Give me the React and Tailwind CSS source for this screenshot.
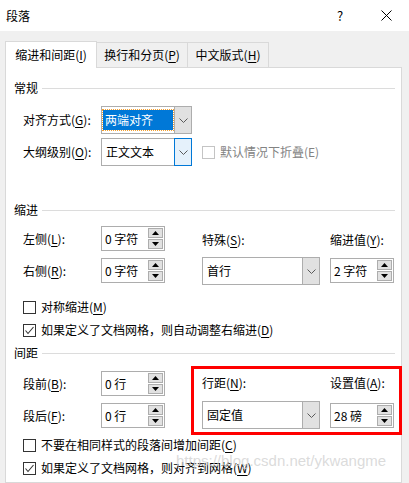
import React from "react";

const Key = ({ children }) => (
  <span className="underline underline-offset-[2px]">{children}</span>
);

const Chevron = () => (
  <svg width="9" height="5" viewBox="0 0 9 5">
    <path d="M0.5 0.5 L4.5 4.5 L8.5 0.5" fill="none" stroke="#5a5a5a" strokeWidth="1" />
  </svg>
);

const Select = ({ value, w, selected, focus }) => (
  <div className={`flex h-[28px] border border-[#adadad] bg-white ${w}`}>
    <div className="flex min-w-0 flex-1 items-center px-px">
      {selected ? (
        <span className="flex h-[20px] w-full items-center bg-[#0078d7] pl-[2px] text-white outline-1 outline-dotted outline-[#f5a030]">
          {value}
        </span>
      ) : (
        <span className="pl-[3px]">{value}</span>
      )}
    </div>
    {focus ? (
      <div className="-my-px -mr-px flex w-[18px] items-center justify-center border border-[#0078d7] bg-[#e5f1fb]">
        <Chevron />
      </div>
    ) : (
      <div className="flex w-[17px] items-center justify-center border-l border-[#adadad] bg-[#e1e1e1]">
        <Chevron />
      </div>
    )}
  </div>
);

const Arrow = ({ down }) => (
  <svg width="7" height="4" viewBox="0 0 7 4">
    <path d={down ? "M0 0 L7 0 L3.5 4 Z" : "M0 4 L7 4 L3.5 0 Z"} fill="#000" />
  </svg>
);

const Spin = ({ value }) => (
  <div className="flex h-[25px] w-[64px] border border-[#adadad] bg-white">
    <div className="flex flex-1 items-center pl-[3px]">{value}</div>
    <div className="flex w-[16px] flex-col gap-px py-px pr-px">
      <div className="flex flex-1 items-center justify-center border border-[#adadad] bg-[#e1e1e1]">
        <Arrow />
      </div>
      <div className="flex flex-1 items-center justify-center border border-[#adadad] bg-[#e1e1e1]">
        <Arrow down />
      </div>
    </div>
  </div>
);

const Check = ({ checked, disabled, children, className = "" }) => (
  <div className={`flex h-[16px] items-center gap-[5px] ${className}`}>
    <span
      className={`flex h-[13px] w-[13px] shrink-0 items-center justify-center border bg-white ${
        disabled ? "border-[#c4c4c4]" : "border-[#333333]"
      }`}
    >
      {checked && (
        <svg width="11" height="11" viewBox="0 0 11 11">
          <path d="M1.5 5.5 L4 8.5 L9.5 2" fill="none" stroke="#333" strokeWidth="1.1" />
        </svg>
      )}
    </span>
    <span className={disabled ? "text-[#838383]" : ""}>{children}</span>
  </div>
);

const Section = ({ title, className = "" }) => (
  <div className={`flex h-[16px] items-center gap-[4px] ${className}`}>
    <span>{title}</span>
    <span className="h-px flex-1 bg-[#dcdcdc]" />
  </div>
);

const Row = ({ label, children, className = "" }) => (
  <div className={`flex items-center ${className}`}>
    <span className="w-[78px] shrink-0">{label}</span>
    {children}
  </div>
);

export default function App() {
  return (
    <div className="relative flex h-[483px] w-[409px] flex-col overflow-hidden bg-[#f0f0f0] font-['Noto_Sans_CJK_SC',sans-serif] text-[12px] leading-[16px] text-black">
      {/* title bar */}
      <div className="flex h-[31px] items-center bg-white">
        <span className="pl-[6px]">段落</span>
        <div className="ml-auto flex h-full">
          <div className="flex w-[46px] items-center justify-center text-[13px]">?</div>
          <div className="flex w-[46px] items-center justify-center">
            <svg width="11" height="11" viewBox="0 0 11 11">
              <path d="M0.5 0.5 L10.5 10.5 M10.5 0.5 L0.5 10.5" stroke="#000" strokeWidth="1" />
            </svg>
          </div>
        </div>
      </div>

      {/* tabs */}
      <div className="relative z-10 -mb-px mt-[10px] flex items-end px-[5px]">
        <div className="flex h-[27px] w-[92px] items-center justify-center border border-b-0 border-[#d9d9d9] bg-white pb-px">
          缩进和间距(<Key>I</Key>)
        </div>
        <div className="flex h-[26px] w-[91px] items-center justify-center border border-l-0 border-[#d9d9d9] bg-[#f0f0f0]">
          换行和分页(<Key>P</Key>)
        </div>
        <div className="flex h-[26px] w-[81px] items-center justify-center border border-l-0 border-[#d9d9d9] bg-[#f0f0f0]">
          中文版式(<Key>H</Key>)
        </div>
      </div>

      {/* panel */}
      <div className="ml-[5px] mr-[7px] flex flex-1 flex-col border border-[#d9d9d9] bg-white pl-[8px] pr-[6px]">
        <Section title="常规" className="mt-[12px]" />
        <div className="pl-[9px]">
          <Row label={<>对齐方式(<Key>G</Key>):</>} className="mt-[10px]">
            <Select value="两端对齐" w="w-[91px]" selected />
          </Row>
          <Row label={<>大纲级别(<Key>O</Key>):</>} className="mt-[4px]">
            <Select value="正文文本" w="w-[91px]" focus />
            <Check disabled className="ml-[10px]">
              默认情况下折叠(E)
            </Check>
          </Row>
        </div>

        <Section title="缩进" className="mt-[36px]" />
        <div className="mt-[8px] flex pl-[9px]">
          <div className="flex w-[142px] flex-col gap-[7px]">
            <Row label={<>左侧(<Key>L</Key>):</>}>
              <Spin value="0 字符" />
            </Row>
            <Row label={<>右侧(<Key>R</Key>):</>}>
              <Spin value="0 字符" />
            </Row>
          </div>
          <div className="ml-[37px] flex w-[118px] flex-col">
            <div className="flex h-[28px] items-center">
              特殊(<Key>S</Key>):
            </div>
            <div className="mt-[3px]">
              <Select value="首行" w="w-[118px]" />
            </div>
          </div>
          <div className="ml-[10px] flex flex-col">
            <div className="flex h-[28px] items-center">
              缩进值(<Key>Y</Key>):
            </div>
            <div className="mt-[4px]">
              <Spin value="2 字符" />
            </div>
          </div>
        </div>
        <div className="pl-[9px]">
          <Check className="mt-[14px]">
            对称缩进(<Key>M</Key>)
          </Check>
          <Check checked className="mt-[7px]">
            如果定义了文档网格，则自动调整右缩进(<Key>D</Key>)
          </Check>
        </div>

        <Section title="间距" className="mt-[7px]" />
        <div className="mt-[10px] flex pl-[9px]">
          <div className="flex w-[142px] flex-col gap-[7px]">
            <Row label={<>段前(<Key>B</Key>):</>}>
              <Spin value="0 行" />
            </Row>
            <Row label={<>段后(<Key>F</Key>):</>}>
              <Spin value="0 行" />
            </Row>
          </div>
          <div className="ml-[37px] flex w-[118px] flex-col">
            <div className="flex h-[24px] items-center">
              行距(<Key>N</Key>):
            </div>
            <div className="mt-[6px]">
              <Select value="固定值" w="w-[118px]" />
            </div>
          </div>
          <div className="ml-[10px] flex flex-col">
            <div className="flex h-[24px] items-center">
              设置值(<Key>A</Key>):
            </div>
            <div className="mt-[8px]">
              <Spin value="28 磅" />
            </div>
          </div>
        </div>
        <div className="pl-[9px]">
          <Check className="mt-[8px]">
            不要在相同样式的段落间增加间距(<Key>C</Key>)
          </Check>
          <Check checked className="mt-[7px]">
            如果定义了文档网格，则对齐到网格(<Key>W</Key>)
          </Check>
        </div>
      </div>

      {/* annotation + watermark */}
      <div className="pointer-events-none absolute left-[191px] top-[366px] h-[69px] w-[211px] border-[3px] border-[#ff0000]" />
      <div className="pointer-events-none absolute left-[176px] top-[452px] whitespace-nowrap font-['Liberation_Sans',sans-serif] text-[15px] leading-[18px] text-[#d2d2d2]/80">
        https://blog.csdn.net/ykwangme
      </div>
    </div>
  );
}
